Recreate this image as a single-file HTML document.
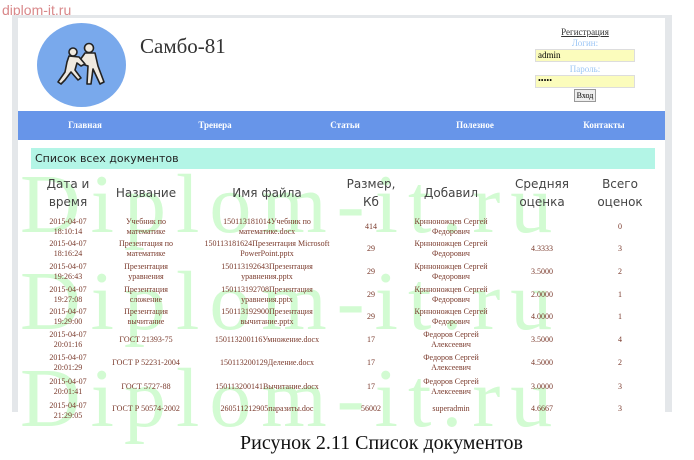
<!DOCTYPE html>
<html><head><meta charset="utf-8"><style>
*{margin:0;padding:0;box-sizing:border-box}
body{width:694px;height:460px;background:#fff;position:relative;overflow:hidden;font-family:"Liberation Serif",serif}
.abs{position:absolute}
.frame{left:12px;top:15px;width:660px;height:397px;background:#e4e7ea}
.inner{left:18px;top:18px;width:647px;height:394px;background:#fff}
.nav{left:18px;top:111px;width:647px;height:29px;background:#6795e9}
.nav span{position:absolute;top:9px;color:#fff;font-weight:bold;font-size:9px;transform:translateX(-50%)}
.wm{left:20px;color:#d2fbd2;font-size:84px;line-height:1;letter-spacing:10px;white-space:nowrap;font-family:"Liberation Serif",serif}
.bar{left:31px;top:148px;width:624px;height:21px;background:#b3f5e6;font-family:"DejaVu Sans",sans-serif;font-size:11px;color:#222;padding:4px 0 0 4px}
.h{font-family:"DejaVu Sans",sans-serif;font-size:12px;color:#444;text-align:center;line-height:18px;transform:translate(-50%,-50%)}
.c{font-size:8px;color:#7a3a2c;text-align:center;line-height:10px;transform:translate(-50%,-50%);white-space:nowrap}
</style></head><body>
<div class="abs" style="left:2px;top:2px;font-family:'Liberation Sans',sans-serif;font-size:14px;color:#d9888a">diplom-it.ru</div>
<div class="abs frame"></div>
<div class="abs inner"></div>
<div class="abs" style="left:37px;top:23px;width:89px;height:84px;border-radius:50%;background:#79a9ec"></div>
<svg class="abs" style="left:55px;top:42px" width="56" height="46" viewBox="0 0 56 46"><g fill="#efe9df" stroke="#222" stroke-width="1.6" stroke-linejoin="round"><circle cx="34" cy="6" r="4.5"/><circle cx="18" cy="10" r="4"/><path d="M30 11 L40 11 L43 24 L49 40 L45 42 L38 27 L36 42 L32 42 L33 24 L27 22 L25 18 Z"/><path d="M14 14 L24 15 L30 22 L26 24 L22 21 L20 28 L26 36 L23 38 L16 30 L10 38 L6 42 L3 40 L10 30 L12 20 Z"/></g></svg>
<div class="abs" style="left:140px;top:34px;font-size:21px;color:#333">Самбо-81</div>
<div class="abs" style="left:535px;top:27px;width:100px;text-align:center;font-size:9px;line-height:11px">
<div style="color:#333;text-decoration:underline">Регистрация</div>
<div style="color:#9cc6f5">Логин:</div>
<div style="background:#fbfcbc;border:1px solid #ddd;height:13px;text-align:left;padding-left:2px;font-size:9px">admin</div>
<div style="color:#9cc6f5;margin-top:2px">Пароль:</div>
<div style="background:#fbfcbc;border:1px solid #ddd;height:13px;text-align:left;padding-left:2px;font-size:8px;line-height:10px">•••••</div>
<div style="margin:1px auto 0;width:22px;height:13px;border:1px solid #999;background:#eee;font-size:8px;line-height:11px">Вход</div>
</div>
<div class="abs nav"><span style="left:67px">Главная</span><span style="left:197px">Тренера</span><span style="left:327px">Статьи</span><span style="left:457px">Полезное</span><span style="left:586px">Контакты</span></div>
<div class="abs wm" style="top:163px">Diplom-it.ru</div>
<div class="abs wm" style="top:260px">Diplom-it.ru</div>
<div class="abs wm" style="top:357px">Diplom-it.ru</div>
<div class="abs bar">Список всех документов</div>
<div class="abs h" style="left:68px;top:193px">Дата и<br>время</div>
<div class="abs h" style="left:146px;top:193px">Название</div>
<div class="abs h" style="left:267px;top:193px">Имя файла</div>
<div class="abs h" style="left:371px;top:193px">Размер,<br>Кб</div>
<div class="abs h" style="left:451px;top:193px">Добавил</div>
<div class="abs h" style="left:542px;top:193px">Средняя<br>оценка</div>
<div class="abs h" style="left:620px;top:193px">Всего<br>оценок</div>
<div class="abs c" style="left:68px;top:227px">2015-04-07<br>18:10:14</div><div class="abs c" style="left:146px;top:227px">Учебник по<br>математике</div><div class="abs c" style="left:267px;top:227px">150113181014Учебник по<br>математике.docx</div><div class="abs c" style="left:371px;top:227px">414</div><div class="abs c" style="left:451px;top:227px">Крнноножцев Сергей<br>Федорович</div><div class="abs c" style="left:620px;top:227px">0</div>
<div class="abs c" style="left:68px;top:249px">2015-04-07<br>18:16:24</div><div class="abs c" style="left:146px;top:249px">Презентация по<br>математике</div><div class="abs c" style="left:267px;top:249px">150113181624Презентация Microsoft<br>PowerPoint.pptx</div><div class="abs c" style="left:371px;top:249px">29</div><div class="abs c" style="left:451px;top:249px">Крнноножцев Сергей<br>Федорович</div><div class="abs c" style="left:542px;top:249px">4.3333</div><div class="abs c" style="left:620px;top:249px">3</div>
<div class="abs c" style="left:68px;top:272px">2015-04-07<br>19:26:43</div><div class="abs c" style="left:146px;top:272px">Презентация<br>уравнения</div><div class="abs c" style="left:267px;top:272px">150113192643Презентация<br>уравнения.pptx</div><div class="abs c" style="left:371px;top:272px">29</div><div class="abs c" style="left:451px;top:272px">Крнноножцев Сергей<br>Федорович</div><div class="abs c" style="left:542px;top:272px">3.5000</div><div class="abs c" style="left:620px;top:272px">2</div>
<div class="abs c" style="left:68px;top:295px">2015-04-07<br>19:27:08</div><div class="abs c" style="left:146px;top:295px">Презентация<br>сложение</div><div class="abs c" style="left:267px;top:295px">150113192708Презентация<br>уравнения.pptx</div><div class="abs c" style="left:371px;top:295px">29</div><div class="abs c" style="left:451px;top:295px">Крнноножцев Сергей<br>Федорович</div><div class="abs c" style="left:542px;top:295px">2.0000</div><div class="abs c" style="left:620px;top:295px">1</div>
<div class="abs c" style="left:68px;top:317px">2015-04-07<br>19:29:00</div><div class="abs c" style="left:146px;top:317px">Презентация<br>вычитание</div><div class="abs c" style="left:267px;top:317px">150113192900Презентация<br>вычитание.pptx</div><div class="abs c" style="left:371px;top:317px">29</div><div class="abs c" style="left:451px;top:317px">Крнноножцев Сергей<br>Федорович</div><div class="abs c" style="left:542px;top:317px">4.0000</div><div class="abs c" style="left:620px;top:317px">1</div>
<div class="abs c" style="left:68px;top:340px">2015-04-07<br>20:01:16</div><div class="abs c" style="left:146px;top:340px">ГОСТ 21393-75</div><div class="abs c" style="left:267px;top:340px">150113200116Умножение.docx</div><div class="abs c" style="left:371px;top:340px">17</div><div class="abs c" style="left:451px;top:340px">Федоров Сергей<br>Алексеевич</div><div class="abs c" style="left:542px;top:340px">3.5000</div><div class="abs c" style="left:620px;top:340px">4</div>
<div class="abs c" style="left:68px;top:363px">2015-04-07<br>20:01:29</div><div class="abs c" style="left:146px;top:363px">ГОСТ Р 52231-2004</div><div class="abs c" style="left:267px;top:363px">150113200129Деление.docx</div><div class="abs c" style="left:371px;top:363px">17</div><div class="abs c" style="left:451px;top:363px">Федоров Сергей<br>Алексеевич</div><div class="abs c" style="left:542px;top:363px">4.5000</div><div class="abs c" style="left:620px;top:363px">2</div>
<div class="abs c" style="left:68px;top:387px">2015-04-07<br>20:01:41</div><div class="abs c" style="left:146px;top:387px">ГОСТ 5727-88</div><div class="abs c" style="left:267px;top:387px">150113200141Вычитание.docx</div><div class="abs c" style="left:371px;top:387px">17</div><div class="abs c" style="left:451px;top:387px">Федоров Сергей<br>Алексеевич</div><div class="abs c" style="left:542px;top:387px">3.0000</div><div class="abs c" style="left:620px;top:387px">3</div>
<div class="abs c" style="left:68px;top:411px">2015-04-07<br>21:29:05</div><div class="abs c" style="left:146px;top:409px">ГОСТ Р 50574-2002</div><div class="abs c" style="left:267px;top:409px">260511212905паразиты.doc</div><div class="abs c" style="left:371px;top:409px">56002</div><div class="abs c" style="left:451px;top:409px">superadmin</div><div class="abs c" style="left:542px;top:409px">4.6667</div><div class="abs c" style="left:620px;top:409px">3</div>
<div class="abs" style="left:240px;top:432px;font-size:20px;color:#111;white-space:nowrap">Рисунок 2.11 Список документов</div>
</body></html>
